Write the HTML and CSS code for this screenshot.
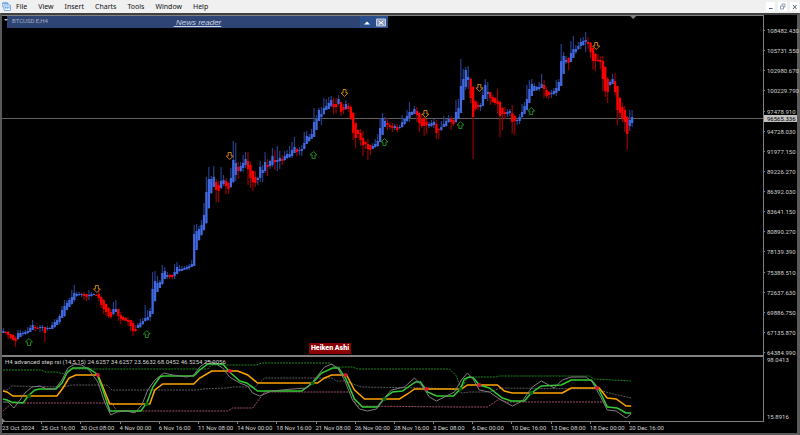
FILE: index.html
```html
<!DOCTYPE html>
<html lang="en">
<head>
    <meta charset="UTF-8">
    <meta name="viewport" content="width=device-width, initial-scale=1.0">
    <title>BTCUSD.E,H4</title>
    <link rel="stylesheet" href="styles.css">
</head>
<body>

    <header class="menubar">
        <svg class="app-icon" viewBox="0 0 18 18">
            <rect x="1" y="1" width="11" height="9" rx="1" fill="#e8f3ff" stroke="#6fa8e6" stroke-width="1.5"/>
            <path d="M1 3h11" stroke="#6fa8e6" stroke-width="2"/>
            <rect x="4" y="6" width="13" height="11" rx="1" fill="#fff" stroke="#4a90e2" stroke-width="1.5"/>
            <path d="M7 9v5M10.500 8v6M14 9v5M6 12l2-2 3 2 4-3" fill="none" stroke="#4a90e2" stroke-width="1.300"/>
        </svg>
        <nav class="menu">
            <button type="button">File</button>
            <button type="button">View</button>
            <button type="button">Insert</button>
            <button type="button">Charts</button>
            <button type="button">Tools</button>
            <button type="button">Window</button>
            <button type="button">Help</button>
        </nav>
        <div class="window-buttons">
            <button type="button" aria-label="Minimize"><svg viewBox="0 0 9 9"><path d="M3 6.500h3.500" stroke="#4d6078"/></svg></button>
            <button type="button" aria-label="Restore"><svg viewBox="0 0 9 9"><path d="M4 3.500v-1.500h3v3h-1.500M2.500 4h3v3h-3z" fill="none" stroke="#8494a8" stroke-width=".9"/></svg></button>
            <button type="button" aria-label="Close"><svg viewBox="0 0 9 9"><path d="M3 3l3.500 4M6.500 3l-3.500 4" stroke="#4d6078"/></svg></button>
        </div>
    </header>

    <main class="chart-window">
        <section class="plot price-plot">
            <svg id="priceChart" viewBox="2 16 762 339" preserveAspectRatio="none"></svg>
            <div class="news-bar">
                <a class="news-title" href="#">&nbsp;News reader</a>
                <button type="button" aria-label="Collapse"><svg viewBox="0 0 14 11"><path d="M4 7.500h6l-3-3z" fill="#fff"/></svg></button>
                <button type="button" aria-label="Close news"><svg viewBox="0 0 14 11"><path d="M2.500 2h9v7h-9z" fill="#8797bb" stroke="#c5cde0"/><path d="M4.500 4l5 3.500M9.500 4l-5 3.500" stroke="#fff"/></svg></button>
            </div>
            <div class="symbol">BTCUSD.E,H4</div>
            <div class="indicator-name">Heiken Ashi</div>
        </section>
        <aside class="axis price-axis" id="priceAxis">
            <div class="current-price">96565.336</div>
        </aside>

        <section class="plot rsi-plot">
            <svg id="rsiChart" viewBox="2 357 762 64" preserveAspectRatio="none"></svg>
            <div class="rsi-label">H4 advanced step rsi (14,5,15) 24.6257 34.6257 23.5632 68.0452 46.5254 25.0056</div>
        </section>
        <aside class="axis rsi-axis">
            <span>98.0413</span>
            <span>15.8916</span>
        </aside>

        <div class="time-axis" id="timeAxis"></div>
    </main>

    <script src="script.js"></script>
</body>
</html>
```

FILE: styles.css
```css
* {
    box-sizing: border-box;
}

body {
    margin: 0;
    background-color: #f0f0f0;
    font-family: Roboto, "Liberation Sans", sans-serif;
    font-size: 6px;
    line-height: 8px;
    color: #d4d4d4;
}

button {
    padding: 0;
    border: none;
    background: none;
    font: inherit;
    color: inherit;
}

svg {
    display: block;
}

/* menu */
.menubar {
    display: flex;
    align-items: center;
    height: 13px;
    padding: 0 1px 0 2px;
    background-color: #f0f0f0;
}

.app-icon {
    width: 9px;
    height: 9px;
}

.menu {
    display: flex;
    flex: 1;
    gap: 11px;
    margin-left: 5px;
    font-family: "Noto Sans", "Open Sans", sans-serif;
    font-size: 7px;
    line-height: 10px;
    color: #111;
}

.window-buttons {
    display: flex;
    gap: 3px;
}

.window-buttons button {
    width: 9px;
    height: 9px;
    background-color: #fff;
}

/* chart window */
.chart-window {
    display: grid;
    grid-template-columns: 1fr 33px;
    border: solid #5a5a5a;
    border-width: 2px 3px 2px 2px;
    border-top-color: #404040;
    background-color: #000;
}

.plot {
    position: relative;
    border-top: 1px solid #808080;
    border-right: 1px solid #808080;
}

.plot > svg {
    width: 100%;
    height: 100%;
}

.price-plot {
    height: 340px;
}

.rsi-plot {
    height: 67px;
    border-top: 2px solid #808080;
    border-bottom: 1px solid #808080;
}

.news-bar {
    position: absolute;
    top: 0;
    left: 5px;
    display: flex;
    width: 381px;
    height: 12px;
    background-color: #2d4474;
}

.news-title {
    flex: 1;
    padding-left: 28px;
    font-family: "Liberation Sans", sans-serif;
    font-size: 8px;
    line-height: 13px;
    font-style: italic;
    text-align: center;
    color: #ccd3e2;
}

.news-bar button {
    width: 14px;
    background-color: #2a4d8c;
}

.news-bar svg {
    width: 14px;
    height: 11px;
}

.symbol {
    position: absolute;
    top: 1px;
    left: 10px;
    color: #a4adbe;
}

.symbol::before {
    content: "";
    position: absolute;
    top: 2px;
    left: -8px;
    border: 2px solid transparent;
    border-top-color: #c0c0c0;
}

.indicator-name {
    position: absolute;
    bottom: 1px;
    left: 307px;
    width: 42px;
    background-color: #8b0000;
    font-size: 7px;
    line-height: 11px;
    font-weight: 900;
    text-align: center;
    white-space: nowrap;
    color: #fff;
}

.rsi-label {
    position: absolute;
    top: 1px;
    left: 3px;
    white-space: nowrap;
}

/* axes */
.axis {
    position: relative;
    display: flex;
    flex-direction: column;
    justify-content: space-between;
}

.price-axis {
    padding-top: 12px;
    margin-bottom: -2px;
    white-space: nowrap;
}

.price-axis span::before {
    content: "";
    display: inline-block;
    width: 1px;
    height: 1px;
    margin-right: 2px;
    vertical-align: 2px;
    background-color: #808080;
}

.current-price {
    position: absolute;
    top: 100px;
    left: 0;
    z-index: 1;
    width: 33px;
    padding-left: 3px;
    background-color: #c0c0c0;
    line-height: 7px;
    color: #000;
}

.rsi-axis {
    padding: 1px 3px 1px;
}

.time-axis {
    grid-column: 1 / -1;
    display: grid;
    grid-auto-flow: column;
    grid-auto-columns: 4.930%;
    height: 11px;
}

.time-axis span {
    position: relative;
    padding-top: 2px;
    white-space: nowrap;
}

.time-axis span::before {
    content: "";
    position: absolute;
    top: 0;
    left: 0;
    width: 1px;
    height: 2px;
    background-color: #808080;
}

/* candles */
.up-wick { fill: #263f8c; }
.down-wick { fill: #960000; }
.up-body { fill: #4169e1; }
.down-body { fill: #ff0000; }

.bid-line {
    stroke: #606060;
    stroke-width: 1;
}

.arrow-up,
.arrow-down {
    fill: none;
    stroke: #1c8a1c;
    stroke-width: 1;
}

.arrow-down {
    stroke: #c8820c;
}

/* step rsi lines */
.line {
    fill: none;
}

.level {
    stroke-width: 1;
    stroke-dasharray: 2 1;
}

.level-up { stroke: #1e8a1e; }
.level-mid { stroke: #5c5c5c; }
.level-down { stroke: #a05068; }

.rsi {
    stroke: #808080;
    stroke-width: 1;
}

.fast {
    stroke: #32cd32;
    stroke-width: 1.5px;
}

.slow {
    stroke: #ffa500;
    stroke-width: 1.5px;
}

.dot-up { fill: #006400; }
.dot-down { fill: #dc143c; }
```

FILE: script.js
```js
// direction, high, body top, body bottom, low
var candles = `
b 328 331 333 333,r 331 332 333 334,r 331 332 335 339,r 334 334 338 339,r 334 335 340 341,r 336 338 341 347,
b 330 333 339 340,b 330 333 337 337,b 331 333 334 336,b 330 332 334 335,b 327 331 333 334,b 325 328 332 332,
b 320 325 330 330,r 325 327 328 331,r 326 328 329 329,b 325 327 328 332,b 325 327 328 331,r 327 327 333 342,
b 326 328 329 331,b 327 328 329 329,b 322 325 329 329,b 319 322 327 328,b 318 320 325 325,b 314 316 322 324,
b 306 310 318 318,b 300 306 316 317,b 300 303 310 310,b 298 300 307 307,b 290 297 304 305,b 285 293 300 302,
b 292 294 296 297,b 292 294 295 296,b 293 294 295 297,r 292 294 296 300,r 294 294 297 301,b 290 295 296 300,
b 292 294 296 297,b 293 294 295 295,r 294 295 296 296,r 290 294 298 301,r 296 297 305 308,r 299 300 309 314,
r 304 304 312 316,r 307 308 316 318,r 309 312 317 319,b 302 309 314 315,b 300 309 312 312,r 309 309 316 321,
r 312 315 319 324,r 316 317 320 321,r 317 318 321 321,r 317 320 322 326,r 320 320 326 331,r 321 323 331 336,
r 325 329 331 332,b 323 325 328 328,b 319 323 327 328,b 318 321 324 325,b 305 318 321 322,b 310 317 320 321,
b 308 311 317 321,b 272 289 314 314,b 271 281 301 302,b 276 283 292 292,b 280 282 288 288,b 265 273 284 285,
b 267 271 279 279,b 272 275 277 279,r 274 275 277 279,r 274 275 277 279,b 264 272 276 279,b 262 267 274 274,
b 265 269 271 272,b 266 269 271 271,b 266 268 270 270,b 265 267 269 270,b 264 266 268 270,b 260 264 267 267,
b 225 234 266 266,b 224 231 250 250,b 226 229 240 241,b 220 225 235 236,b 203 215 230 231,b 177 192 223 224,
b 167 179 208 209,b 176 179 193 194,b 166 177 187 187,r 179 182 190 202,r 181 185 191 202,b 167 181 188 189,
b 175 180 184 186,r 178 181 186 194,r 182 183 189 194,b 168 178 187 188,b 141 160 182 183,b 143 163 175 181,
r 162 167 171 179,b 162 166 171 172,b 155 163 168 172,b 152 159 165 168,r 152 161 169 185,r 162 165 178 188,
r 170 171 182 191,r 171 177 183 187,b 177 178 180 185,b 161 167 178 182,b 165 170 173 182,b 152 162 171 173,
r 159 165 167 176,b 160 161 166 169,b 148 156 165 167,r 150 160 162 170,b 146 160 162 171,b 151 158 161 169,
r 155 159 161 165,b 151 156 160 161,b 150 154 158 159,b 146 154 157 158,b 142 150 156 158,b 137 147 153 153,
r 148 149 152 156,b 147 150 151 155,b 145 149 151 156,b 132 143 149 149,b 131 136 144 144,b 134 137 141 142,
b 129 134 139 139,b 108 122 137 137,b 115 119 130 130,b 108 110 121 121,b 107 114 117 125,b 98 108 114 115,
b 99 106 110 110,b 97 103 109 109,b 96 100 106 107,r 98 104 107 114,r 98 104 107 113,b 95 99 104 105,
r 102 102 112 116,r 104 107 110 114,b 100 104 109 110,r 103 106 109 112,r 105 107 119 120,r 112 113 133 140,
r 123 123 138 148,r 129 130 134 138,r 129 133 140 146,r 131 138 145 156,r 141 142 144 149,r 139 144 149 160,
r 145 145 150 155,b 143 146 149 149,b 139 144 147 148,b 134 141 146 147,b 118 128 142 142,b 113 118 135 135,
b 117 121 127 127,r 118 123 125 130,r 122 125 127 129,r 123 126 128 132,b 124 126 128 130,r 124 127 130 132,
b 125 127 128 129,b 115 122 127 128,b 118 119 124 125,b 110 116 121 122,b 102 112 118 122,b 111 112 115 115,
b 106 109 114 114,r 107 111 115 122,r 112 113 123 132,r 114 119 126 128,r 117 118 126 136,r 119 122 125 134,
b 122 124 126 128,b 120 123 126 127,b 119 122 125 128,r 120 124 133 139,r 128 129 130 139,b 121 127 130 131,
b 116 124 127 127,b 119 121 126 127,b 115 119 122 123,r 116 119 122 130,r 119 120 124 126,b 100 112 122 123,
b 99 108 119 119,b 59 86 113 113,b 69 79 100 100,b 67 70 87 90,b 66 77 80 89,r 78 79 98 103,
r 86 87 117 159,r 101 101 109 111,r 102 105 107 110,b 103 105 107 111,b 87 95 106 106,b 79 85 99 99,
b 82 92 94 101,r 92 92 98 105,r 95 97 102 103,r 97 98 103 105,r 89 101 104 113,r 101 102 116 137,
r 107 108 114 130,r 107 112 114 119,b 109 112 114 117,b 109 111 113 116,r 105 113 122 134,r 115 116 121 135,
b 118 120 121 125,b 114 117 121 124,b 104 112 117 119,b 102 106 114 114,b 85 99 110 110,b 80 89 103 103,
b 79 84 96 96,b 83 86 91 91,b 86 87 90 91,b 82 87 89 91,b 74 84 88 88,r 80 85 89 98,
r 87 90 96 98,r 91 92 95 99,b 90 93 94 98,b 88 91 94 95,b 80 88 93 96,b 79 82 91 91,
b 44 61 86 86,b 52 56 74 74,b 56 60 62 64,r 57 58 63 70,b 41 53 62 62,b 36 49 58 58,
b 45 49 52 54,b 42 46 49 50,b 38 42 46 49,b 37 41 45 46,b 32 40 42 52,r 37 42 44 49,
r 42 43 52 58,r 46 48 61 70,r 53 54 61 71,r 54 60 61 62,r 56 60 62 69,r 56 61 79 91,
r 66 67 91 97,r 77 79 92 103,b 80 82 85 86,b 74 79 84 84,r 73 81 92 95,r 86 86 110 125,
r 97 98 113 117,r 103 107 119 122,r 106 110 122 132,r 116 117 134 150,b 110 120 126 131,b 110 117 123 127
`.trim().split(/,\s*/);

var sellArrows = [[97, 289], [230, 156], [345, 93], [426, 114], [480, 88], [597, 46]];
var buyArrows = [[29, 342], [147, 334], [314, 155], [385, 142], [461, 125], [532, 111]];

var prices = ['108482.430', '105731.550', '102980.670', '100229.790', '97478.910', '94728.030',
    '91977.150', '89226.270', '86392.030', '83641.150', '80890.270', '78139.390', '75388.510',
    '72637.630', '69886.750', '67135.870', '64384.990'];

var times = ['23 Oct 2024', '25 Oct 16:00', '30 Oct 08:00', '4 Nov 00:00', '6 Nov 16:00', '11 Nov 08:00',
    '14 Nov 00:00', '18 Nov 16:00', '21 Nov 08:00', '26 Nov 00:00', '28 Nov 16:00', '3 Dec 08:00',
    '6 Dec 00:00', '10 Dec 16:00', '13 Dec 08:00', '18 Dec 00:00', '20 Dec 16:00'];

var lines = [
    ['level level-up', '3,370 42,370 45,372 57,372 63,374 70,369 208,369 212,365 257,365 262,363 330,363 335,367 353,367 358,369 450,369 457,376 462,389 468,377 497,377 500,376 590,376 595,379 632,381'],
    ['level level-mid', '3,390 7,390 12,386 63,387 72,385 107,385 112,390 197,390 203,389 227,388 233,387 255,387 265,378 332,378 337,381 345,381 362,387 428,388 453,389 463,393 470,392 490,392 502,388 597,389 610,393 632,398'],
    ['level level-down', '3,411 12,403 112,403 117,411 228,411 233,408 253,408 265,392 352,392 357,406 453,407 488,407 500,399 507,402 605,402 610,407'],
    ['slow', '3,391 7,392 13,396 57,396 63,388 69,378 76,375 98,375 103,387 110,404 150,404 155,390 163,384 194,384 200,378 212,371 238,371 248,375 258,383 318,383 325,378 332,375 347,375 355,390 365,399 400,399 408,394 415,389 462,389 468,385 498,385 505,391 513,393 563,393 572,388 600,388 608,398 617,399 627,406 632,406'],
    ['fast', '3,399 7,400 11,402 23,403 29,395 35,390 40,389 56,389 62,383 67,373 73,368 88,368 97,374 102,387 110,411 141,411 147,403 153,387 160,377 163,376 194,376 200,370 208,364 223,364 230,372 240,381 247,383 258,391 302,391 313,383 322,373 333,368 339,368 346,378 355,399 363,407 378,407 385,398 393,392 403,391 416,382 421,382 428,392 437,396 454,396 461,389 465,379 470,377 474,378 480,385 490,388 503,398 512,401 525,401 532,393 542,386 562,385 572,380 592,380 600,390 608,407 618,408 627,413 632,413'],
    ['rsi', '3,402 8,402 14,408 20,400 25,393 32,387 40,386 47,389 55,389 62,380 68,368 75,364 82,365 90,371 98,382 105,403 111,415 117,412 127,411 135,413 142,405 148,390 155,380 164,373 173,375 187,377 194,375 200,367 208,361 215,363 223,368 230,377 240,383 248,386 253,393 260,396 272,391 293,389 307,388 317,377 325,367 332,364 338,368 345,380 353,400 360,409 368,411 377,409 383,400 392,390 405,387 415,378 422,385 430,397 437,401 447,396 455,392 462,380 468,373 473,378 480,390 490,392 500,399 513,406 523,401 533,387 542,381 555,388 563,380 572,377 587,377 593,382 602,398 608,410 617,411 627,418 632,414']
];

var sellDots = [[98, 375], [230, 371], [346, 375], [427, 389], [480, 385], [598, 388]];
var buyDots = [[29, 396], [147, 404], [313, 383], [385, 399], [461, 389], [532, 393]];

function rect(cls, x, y, w, h) {
    return `<rect class="${cls}" x="${x}" y="${y}" width="${w}" height="${h}"/>`;
}

function drawPrice() {
    var out = '<path class="bid-line" d="M2 118.5H764"/>';
    candles.forEach(function (row, i) {
        var c = row.split(' ');
        var dir = c[0] === 'b' ? 'up' : 'down';
        var x = 3.3 + i * 2.45;
        out += rect(dir + '-wick', x - 0.6, c[1], 1.2, c[4] - c[1]);
        out += rect(dir + '-body', x - 1.1, c[2], 2.3, c[3] - c[2]);
    });
    sellArrows.forEach(function (p) {
        out += `<path class="arrow-down" transform="translate(${p[0]} ${p[1]})" d="M-1.500-3.500h3v3.500h2l-3.500 3.500l-3.500-3.500h2z"/>`;
    });
    buyArrows.forEach(function (p) {
        out += `<path class="arrow-up" transform="translate(${p[0]} ${p[1]})" d="M-1.500 3.500h3v-3.500h2l-3.500-3.500l-3.500 3.500h2z"/>`;
    });
    // chart shift mark
    out += '<path d="M631 16h6l-3 3z" fill="#808080"/>';
    document.getElementById('priceChart').innerHTML = out;
}

function drawRsi() {
    var out = '';
    lines.forEach(function (l) {
        out += `<polyline class="line ${l[0]}" points="${l[1]}"/>`;
    });
    sellDots.forEach(function (p) {
        out += `<circle class="dot-down" cx="${p[0]}" cy="${p[1]}" r="2"/>`;
    });
    buyDots.forEach(function (p) {
        out += `<circle class="dot-up" cx="${p[0]}" cy="${p[1]}" r="2"/>`;
    });
    out += '<path d="M2 418l3 3h-3z" fill="#808080"/>';
    document.getElementById('rsiChart').innerHTML = out;
}

function fill(id, items) {
    document.getElementById(id).insertAdjacentHTML('beforeend', items.map(t => `<span>${t}</span>`).join(''));
}

drawPrice();
drawRsi();
fill('priceAxis', prices);
fill('timeAxis', times);
```
